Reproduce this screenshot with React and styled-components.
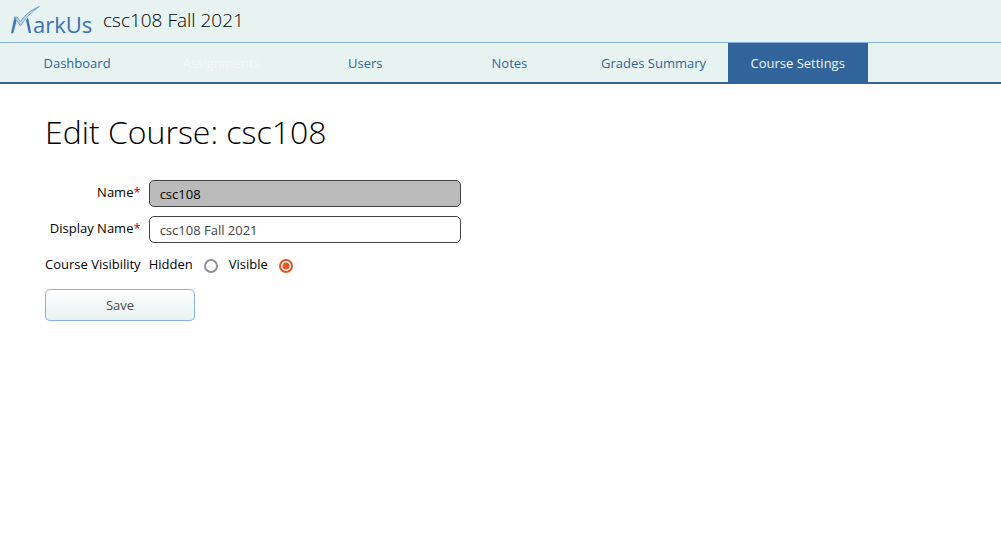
import React, { useState } from 'react';
import styled, { createGlobalStyle } from 'styled-components';

const colors = {
  pale: '#e7f3f1',
  line: '#89b1dd',
  primary: '#31649b',
  field: '#444444',
  disabled: '#bbbbbb',
  error: '#bf0000',
  accent: '#e95420',
  ring: '#8f8f9d',
};

const GlobalStyle = createGlobalStyle`
  *, *::before, *::after { box-sizing: border-box; }
  body {
    margin: 0;
    background: #fff;
    color: #000;
    font: 13px/20px "Open Sans", "Noto Sans", sans-serif;
  }
`;

const Header = styled.header`
  display: flex;
  align-items: flex-start;
  gap: 8px;
  height: 42px;
  padding: 0 8px;
  background: ${colors.pale};
`;

const LogoLink = styled.a`
  display: block;
  padding: 3px 0;
  line-height: 0;
`;

const CourseName = styled.span`
  font-size: 19px;
  font-weight: 300;
  line-height: 40px;
`;

const Nav = styled.nav`
  background: ${colors.pale};
  border-top: 1px solid ${colors.line};
  border-bottom: 2px solid ${colors.primary};
`;

const TabList = styled.ul`
  display: flex;
  gap: 4px;
  margin: 0;
  padding: 0;
  list-style: none;
`;

const TabItem = styled.li`
  flex: 0 0 14%;

  &:first-child {
    margin-left: 7px;
  }
`;

const TabLink = styled.a`
  display: block;
  padding: 10px 0 9px;
  text-align: center;
  text-decoration: none;
  white-space: nowrap;
  color: ${({ $state }) => ($state ? '#f3f7fb' : colors.primary)};
  background: ${({ $state }) => ($state === 'active' ? colors.primary : 'transparent')};
`;

const Main = styled.main`
  padding: 24px 45px;
`;

const Title = styled.h1`
  margin: 0 0 24px;
  font-size: 32px;
  font-weight: 300;
  line-height: 48px;
`;

const Form = styled.form`
  display: flex;
  flex-direction: column;
  align-items: flex-start;
  gap: 10px;
`;

const Fields = styled.div`
  display: grid;
  grid-template-columns: max-content minmax(0, 312px);
  gap: 9px 8px;
  width: 100%;
`;

const Label = styled.label`
  padding-top: 2px;
  text-align: right;
  white-space: nowrap;
`;

const Required = styled.span`
  color: ${colors.error};
`;

const TextInput = styled.input`
  width: 100%;
  height: 27px;
  padding: 0 10px;
  border: 1px solid ${colors.field};
  border-radius: 5px;
  background: #fff;
  color: ${colors.field};
  font: inherit;

  &:disabled {
    background: ${colors.disabled};
    color: #000;
  }
`;

const RadioGroup = styled.div`
  display: flex;
  align-items: flex-start;
  height: 27px;
  padding-top: 2px;
`;

const RadioLabel = styled.label`
  display: flex;
  gap: 11px;
  margin-right: 11px;
`;

const Radio = styled.input`
  appearance: none;
  width: 14px;
  height: 14px;
  margin: 5px 0 0;
  border: 2px solid ${colors.ring};
  border-radius: 50%;
  background: #fff;

  &:checked {
    border-color: ${colors.accent};
    background: radial-gradient(circle, ${colors.accent} 3px, #fff 4px);
  }
`;

const SaveButton = styled.button`
  min-width: 150px;
  height: 32px;
  border: 1px solid ${colors.line};
  border-radius: 5px;
  background: linear-gradient(#fff, ${colors.pale});
  color: ${colors.field};
  font: inherit;
`;

function Logo() {
  return (
    <svg width="87" height="36" viewBox="0 0 87 36" role="img" aria-label="MarkUs">
      <path d="M3.4 30 L5 30 L8.4 17 L6.8 14 Z" fill="#3d70b8" stroke="#3d70b8" strokeWidth="0.6" />
      <path d="M18 17 L20 14.5 L23.2 30 L20.8 30 Z" fill="#3d70b8" />
      <path
        d="M6.4 14 L9 14 L12.6 18.6 C17 12 23 6.6 31.4 3.6 C24 8.6 17.4 14.6 12.6 23 Z"
        fill="#b5d5e7"
        stroke="#6f9fcb"
        strokeWidth="0.9"
        strokeLinejoin="round"
      />
      <text x="25" y="30" fill="#3c6eb4" fontFamily="Open Sans, Noto Sans, sans-serif" fontSize="22">arkUs</text>
    </svg>
  );
}

const tabs = [
  { name: 'Dashboard' },
  { name: 'Assignments', state: 'hover' },
  { name: 'Users' },
  { name: 'Notes' },
  { name: 'Grades Summary' },
  { name: 'Course Settings', state: 'active' },
];

export default function App() {
  const [displayName, setDisplayName] = useState('csc108 Fall 2021');
  const [visibility, setVisibility] = useState('Visible');

  return (
    <>
      <GlobalStyle />
      <Header>
        <LogoLink href="#"><Logo /></LogoLink>
        <CourseName>csc108 Fall 2021</CourseName>
      </Header>
      <Nav>
        <TabList>
          {tabs.map(({ name, state }) => (
            <TabItem key={name}>
              <TabLink href="#" $state={state} aria-current={state === 'active' ? 'page' : undefined}>{name}</TabLink>
            </TabItem>
          ))}
        </TabList>
      </Nav>
      <Main>
        <Title>Edit Course: csc108</Title>
        <Form onSubmit={(e) => e.preventDefault()}>
          <Fields>
            <Label htmlFor="name">Name<Required>*</Required></Label>
            <TextInput id="name" type="text" value="csc108" disabled readOnly />
            <Label htmlFor="display-name">Display Name<Required>*</Required></Label>
            <TextInput id="display-name" type="text" value={displayName} onChange={(e) => setDisplayName(e.target.value)} />
            <Label as="span" id="visibility">Course Visibility</Label>
            <RadioGroup role="radiogroup" aria-labelledby="visibility">
              {['Hidden', 'Visible'].map((option) => (
                <RadioLabel key={option}>
                  {option}
                  <Radio type="radio" name="visibility" checked={visibility === option} onChange={() => setVisibility(option)} />
                </RadioLabel>
              ))}
            </RadioGroup>
          </Fields>
          <SaveButton type="submit">Save</SaveButton>
        </Form>
      </Main>
    </>
  );
}
